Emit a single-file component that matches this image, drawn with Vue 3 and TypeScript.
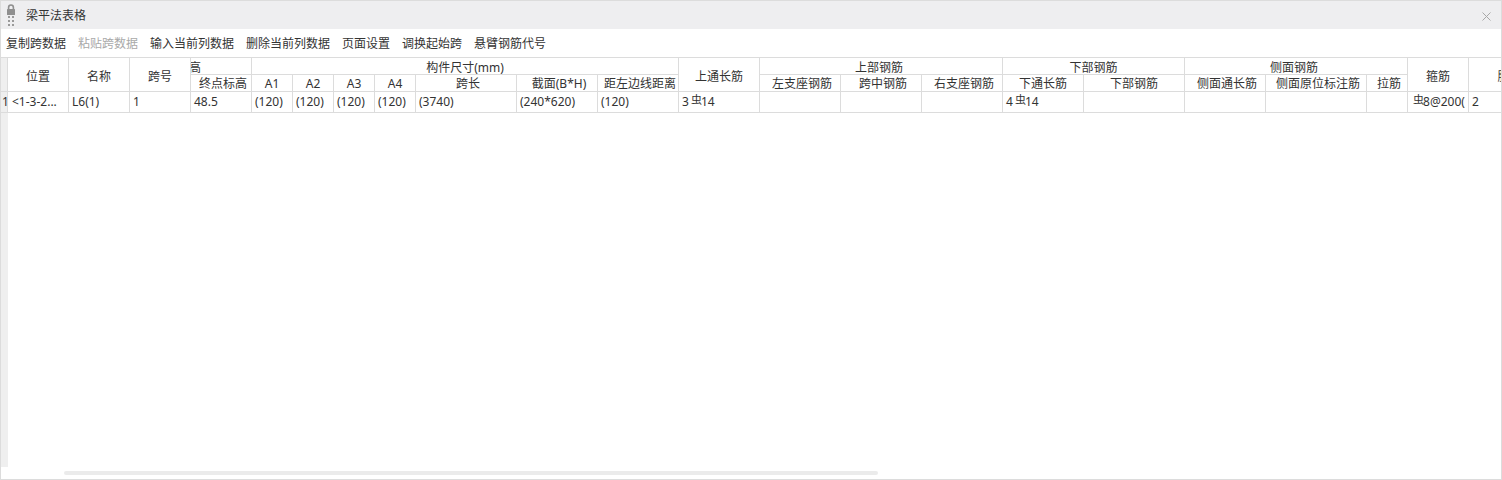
<script setup lang="ts">
interface Col { width: number }
interface HeadCell { text: string; colspan?: number; rowspan?: number; kind?: string }

const widths: number[] = [7, 61, 61, 61, 61, 41, 41, 41, 41, 101, 81, 81, 81, 81, 81, 81, 81, 101, 81, 101, 41, 61, 82]
const cols: Col[] = widths.map((width) => ({ width }))
const tableWidth = widths.reduce((a, b) => a + b, 0)

const tools = [
  { label: '复制跨数据' },
  { label: '粘贴跨数据', disabled: true },
  { label: '输入当前列数据' },
  { label: '删除当前列数据' },
  { label: '页面设置' },
  { label: '调换起始跨' },
  { label: '悬臂钢筋代号' },
]

const headTop: HeadCell[] = [
  { text: '', rowspan: 2, kind: 'gutter' },
  { text: '位置', rowspan: 2 },
  { text: '名称', rowspan: 2 },
  { text: '跨号', rowspan: 2 },
  { text: '高', kind: 'clip' },
  { text: '构件尺寸(mm)', colspan: 7 },
  { text: '上通长筋', rowspan: 2 },
  { text: '上部钢筋', colspan: 3, kind: 'back' },
  { text: '下部钢筋', colspan: 2 },
  { text: '侧面钢筋', colspan: 3, kind: 'back' },
  { text: '箍筋', rowspan: 2 },
  { text: '肢数', rowspan: 2 },
]

const headSub: HeadCell[] = [
  { text: '终点标高', kind: 'fwd' },
  { text: 'A1' },
  { text: 'A2' },
  { text: 'A3' },
  { text: 'A4' },
  { text: '跨长', kind: 'fwd' },
  { text: '截面(B*H)', kind: 'fwd' },
  { text: '距左边线距离', kind: 'fwd' },
  { text: '左支座钢筋', kind: 'fwd' },
  { text: '跨中钢筋', kind: 'fwd' },
  { text: '右支座钢筋', kind: 'fwd' },
  { text: '下通长筋' },
  { text: '下部钢筋' },
  { text: '侧面通长筋', kind: 'fwd' },
  { text: '侧面原位标注筋', kind: 'fwd' },
  { text: '拉筋', kind: 'fwd' },
]

const plainBefore = ['<1-3-2...', 'L6(1)', '1', '48.5', '(120)', '(120)', '(120)', '(120)', '(3740)', '(240*620)', '(120)']
</script>

<template>
  <div class="window">
    <header class="titlebar">
      <svg class="grip" width="10" height="24" viewBox="0 0 10 24" aria-hidden="true">
        <path d="M2.6 6.5V4.4a2.4 2.4 0 0 1 4.8 0V6.5" fill="none" stroke="#8f8f8f" stroke-width="1.6" />
        <rect x="1" y="6" width="8" height="6" rx="0.5" fill="#8f8f8f" />
        <g fill="#9a9a9a">
          <rect x="2" y="13" width="2" height="2" />
          <rect x="6" y="13" width="2" height="2" />
          <rect x="2" y="17" width="2" height="2" />
          <rect x="6" y="17" width="2" height="2" />
          <rect x="2" y="21" width="2" height="2" />
          <rect x="6" y="21" width="2" height="2" />
        </g>
      </svg>
      <span class="title">梁平法表格</span>
      <svg class="close" width="9" height="9" viewBox="0 0 9 9" aria-hidden="true">
        <path d="M0.5 0.5l8 8M8.5 0.5l-8 8" fill="none" stroke="#a8a8a8" stroke-width="1" />
      </svg>
    </header>

    <nav class="toolbar">
      <span v-for="t in tools" :key="t.label" :class="{ disabled: t.disabled }">{{ t.label }}</span>
    </nav>

    <section class="grid-area">
      <table class="grid" :style="{ width: tableWidth + 'px' }">
        <colgroup>
          <col v-for="(c, i) in cols" :key="i" :style="{ width: c.width + 'px' }" />
        </colgroup>
        <thead>
          <tr class="head-row">
            <th
              v-for="(h, i) in headTop"
              :key="i"
              :colspan="h.colspan"
              :rowspan="h.rowspan"
              :class="h.kind"
            >
              <div class="label top" :class="{ clipped: h.kind === 'clip' }">{{ h.text }}</div>
            </th>
          </tr>
          <tr class="head-row">
            <th v-for="(h, i) in headSub" :key="i" :class="h.kind">
              <div class="label">{{ h.text }}</div>
            </th>
          </tr>
        </thead>
        <tbody>
          <tr class="body-row">
            <td class="gutter index">1</td>
            <td v-for="(v, i) in plainBefore" :key="i" :class="{ first: i === 0 }">{{ v }}</td>
            <td>3<span class="bar">虫</span>14</td>
            <td></td>
            <td></td>
            <td></td>
            <td>4<span class="bar">虫</span>14</td>
            <td></td>
            <td></td>
            <td></td>
            <td></td>
            <td><span class="bar lead">虫</span>8@200(</td>
            <td>2</td>
          </tr>
        </tbody>
      </table>
    </section>

    <div class="scroll-track">
      <div class="scroll-thumb"></div>
    </div>
  </div>
</template>

<style scoped>
.window {
  box-sizing: border-box;
  width: 1502px;
  height: 480px;
  border: 1px solid #dcdcdc;
  background: #fff;
  overflow: hidden;
  display: flex;
  flex-direction: column;
  color: #333;
  font-family: "Noto Sans", "Noto Sans CJK SC", sans-serif;
  font-size: 12px;
}
.titlebar {
  flex: none;
  height: 28px;
  background: #eeeef0;
  display: flex;
  align-items: center;
  padding: 0 10px 0 5px;
}
.title {
  margin-left: 10px;
  padding-top: 2px;
  line-height: 28px;
}
.close {
  margin-left: auto;
  margin-top: 2px;
}
.toolbar {
  flex: none;
  height: 28px;
  display: flex;
  align-items: center;
  gap: 12px;
  padding-left: 5px;
}
.toolbar .disabled {
  color: #a9a9a9;
}
.grid-area {
  flex: none;
  height: 410px;
  position: relative;
  overflow: hidden;
  border-top: 1px solid #dcdcdc;
  box-sizing: border-box;
}
.grid-area::before {
  content: "";
  position: absolute;
  left: 0;
  top: 0;
  bottom: 0;
  width: 7px;
  background: #efefef;
}
.grid {
  position: relative;
  table-layout: fixed;
  border-collapse: separate;
  border-spacing: 0;
}
.grid th,
.grid td {
  box-sizing: border-box;
  padding: 0;
  border-right: 1px solid #dcdcdc;
  border-bottom: 1px solid #dcdcdc;
  overflow: hidden;
  white-space: nowrap;
  background: #fff;
}
.grid th {
  font-weight: 400;
  text-align: center;
}
.label {
  height: 16px;
  line-height: 18px;
}
.label.top {
  line-height: 20px;
}
.head-row {
  height: 17px;
}
.body-row {
  height: 21px;
}
.grid td {
  padding-left: 3px;
  line-height: 20px;
}
.grid td.first {
  padding-left: 4px;
}
.grid .gutter {
  background: #efefef;
}
.grid td.index {
  padding-left: 1px;
}
.grid th.fwd {
  padding-left: 4px;
}
.grid th.back {
  padding-right: 4px;
}
.grid th.clip {
  text-align: left;
}
.clipped {
  margin-left: -2px;
}
.bar {
  font-size: 11px;
  line-height: 10px;
  position: relative;
  top: -2px;
  margin: 0 -1px 0 2px;
}
.scroll-track {
  flex: none;
  padding: 4px 0 0 63px;
}
.scroll-thumb {
  width: 814px;
  height: 4px;
  border-radius: 2px;
  background: #ebebeb;
}
</style>
